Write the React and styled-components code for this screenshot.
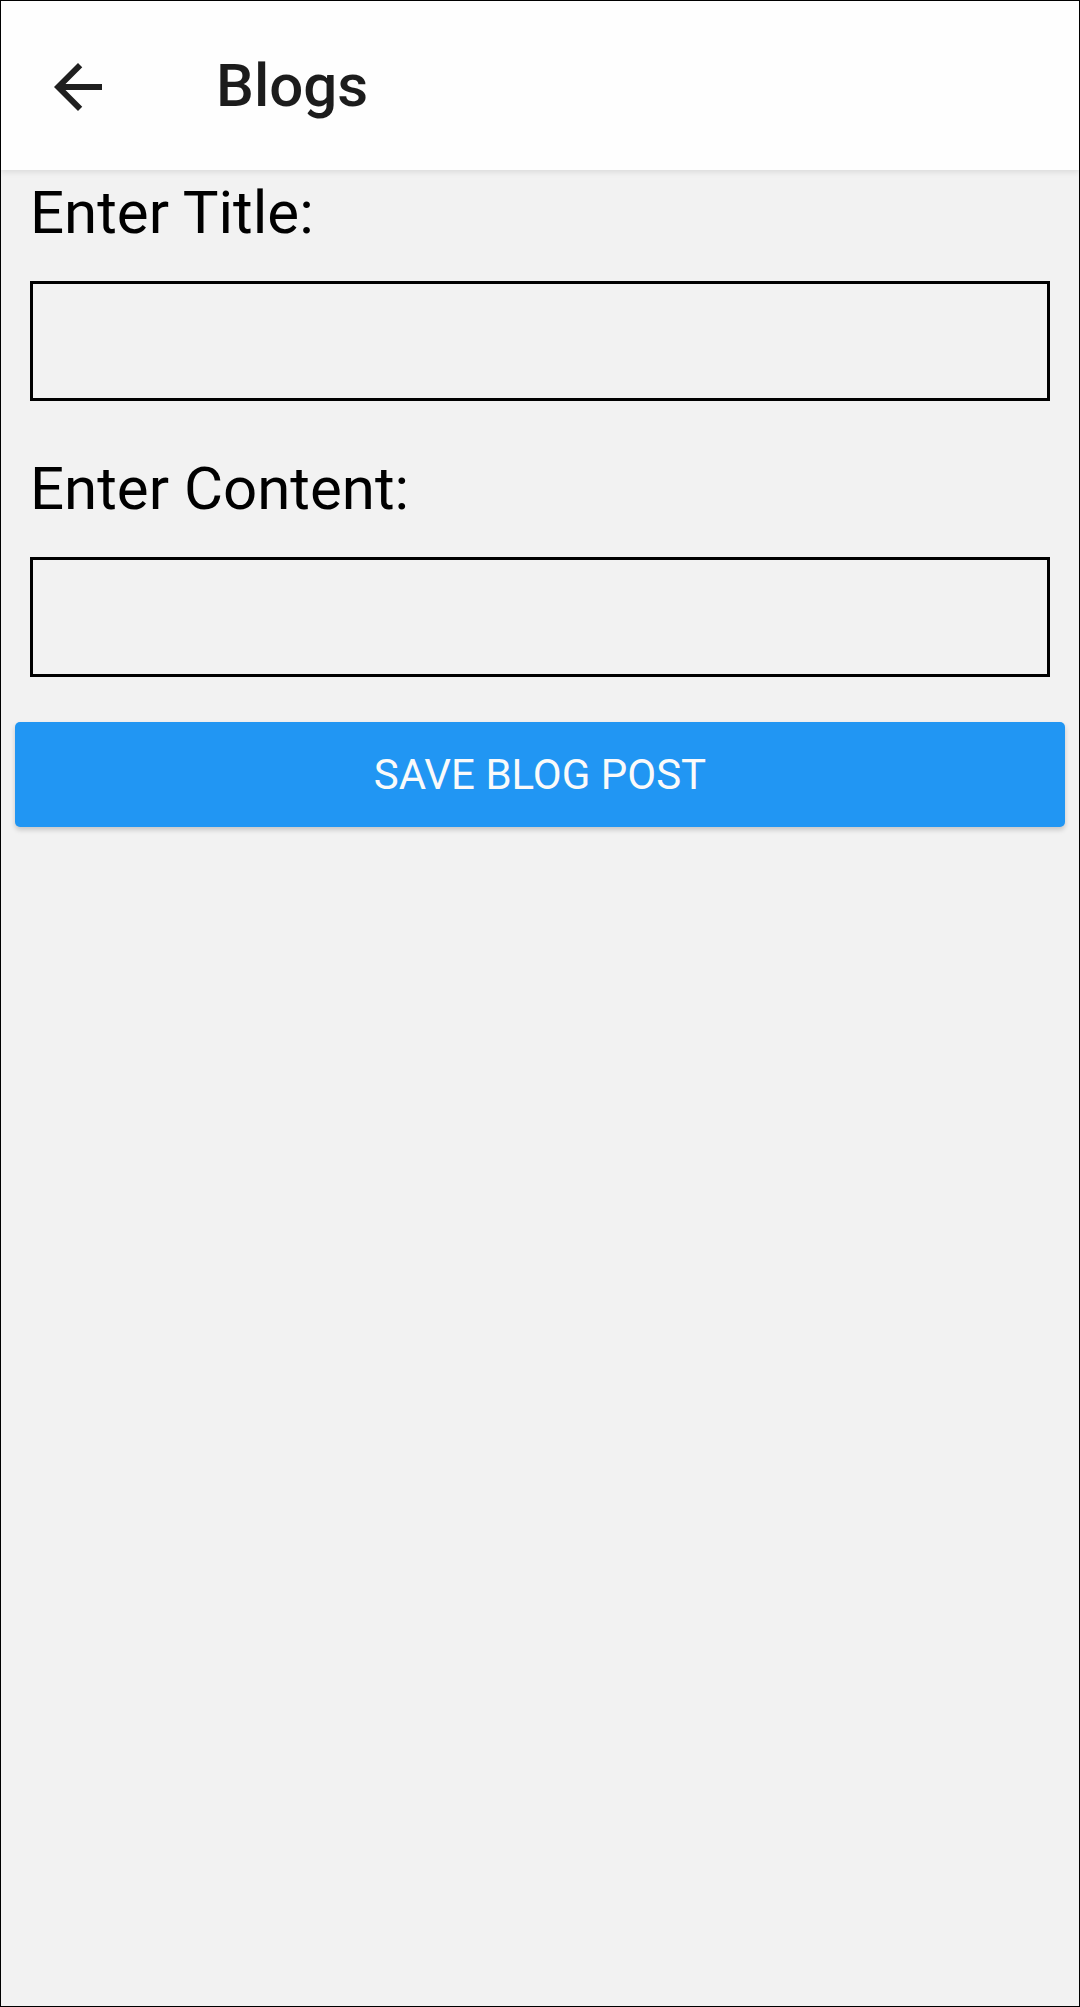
import React, { useState } from "react";
import styled, { createGlobalStyle } from "styled-components";

const GlobalStyle = createGlobalStyle`
  html, body {
    margin: 0;
    padding: 0;
    background: #f2f2f2;
  }
  * {
    box-sizing: border-box;
  }
`;

function BackIcon() {
  return (
    <svg width="72" height="72" viewBox="0 0 24 24" fill="#1f1f1f">
      <path d="M20 11H7.83l5.59-5.59L12 4l-8 8 8 8 1.41-1.41L7.83 13H20v-2z" />
    </svg>
  );
}

export default function App() {
  const [post, setPost] = useState({ title: "", content: "" });

  return (
    <Screen>
      <GlobalStyle />
      <TopBar>
        <BackButton aria-label="back">
          <BackIcon />
        </BackButton>
        <Title>Blogs</Title>
      </TopBar>
      <Form>
        <Label>Enter Title:</Label>
        <Field
          value={post.title}
          onChange={(e) => setPost({ ...post, title: e.target.value })}
        />
        <Label $gap={52}>Enter Content:</Label>
        <Field
          value={post.content}
          onChange={(e) => setPost({ ...post, content: e.target.value })}
        />
        <SaveButton>SAVE BLOG POST</SaveButton>
      </Form>
    </Screen>
  );
}

const Screen = styled.div`
  width: 1080px;
  height: 2007px;
  border: 1px solid #000;
  background: #f2f2f2;
  display: flex;
  flex-direction: column;
  font-family: Roboto, "Liberation Sans", sans-serif;
`;

const TopBar = styled.header`
  height: 169px;
  background: #fefefe;
  display: flex;
  align-items: center;
  padding-left: 41px;
  box-shadow: 0 2px 6px rgba(0, 0, 0, 0.1);
  position: relative;
  z-index: 1;
`;

const BackButton = styled.button`
  width: 72px;
  height: 72px;
  padding: 0;
  border: none;
  background: none;
  display: flex;
  margin-top: 2px;
`;

const Title = styled.h1`
  margin: 0 0 0 102px;
  font-size: 60px;
  font-weight: 500;
  color: #1c1c1c;
  line-height: 72px;
`;

const Form = styled.div`
  display: flex;
  flex-direction: column;
  padding: 7px 14px 0 14px;
`;

const Label = styled.label`
  margin: ${(p) => p.$gap || 0}px 0 0 15px;
  font-size: 60px;
  line-height: 72px;
  color: #000;
`;

const Field = styled.input`
  margin: 32px 15px 0 15px;
  height: 120px;
  border: 3px solid #000;
  background: transparent;
  outline: none;
  font-family: inherit;
  font-size: 48px;
  padding: 0 16px;
`;

const SaveButton = styled.button`
  margin-top: 45px;
  height: 105px;
  border: none;
  border-radius: 5px;
  background: #2196f3;
  color: #fafafa;
  font-family: Roboto, "Liberation Sans", sans-serif;
  font-size: 42px;
  font-weight: 400;
  box-shadow: 0 3px 5px rgba(0, 0, 0, 0.18);
`;
